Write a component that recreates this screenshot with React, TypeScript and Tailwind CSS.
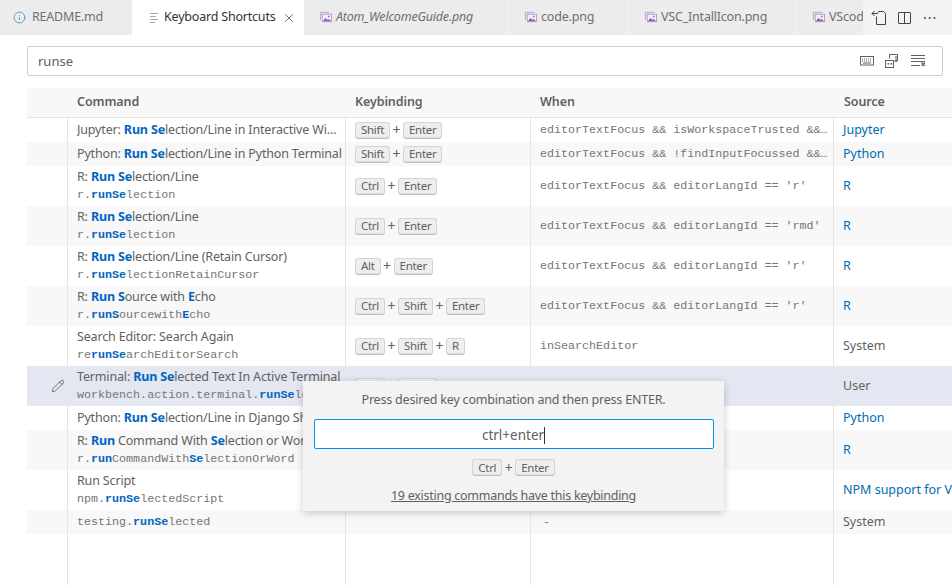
import React from 'react';
import { Info, X, Pencil } from 'lucide-react';

type Row = {
  command?: string;
  id?: string;
  keys?: string[];
  when?: string;
  source: string;
  link?: boolean;
  selected?: boolean;
};

const rows: Row[] = [
  { command: 'Jupyter: [Run Se]lection/Line in Interactive Window', keys: ['Shift', 'Enter'], when: 'editorTextFocus && isWorkspaceTrusted && jupyter.ownsSelection', source: 'Jupyter', link: true },
  { command: 'Python: [Run Se]lection/Line in Python Terminal', keys: ['Shift', 'Enter'], when: 'editorTextFocus && !findInputFocussed && python.datascience', source: 'Python', link: true },
  { command: 'R: [Run Se]lection/Line', id: 'r.[runSe]lection', keys: ['Ctrl', 'Enter'], when: "editorTextFocus && editorLangId == 'r'", source: 'R', link: true },
  { command: 'R: [Run Se]lection/Line', id: 'r.[runSe]lection', keys: ['Ctrl', 'Enter'], when: "editorTextFocus && editorLangId == 'rmd'", source: 'R', link: true },
  { command: 'R: [Run Se]lection/Line (Retain Cursor)', id: 'r.[runSe]lectionRetainCursor', keys: ['Alt', 'Enter'], when: "editorTextFocus && editorLangId == 'r'", source: 'R', link: true },
  { command: 'R: [Run S]ource with [E]cho', id: 'r.[runS]ourcewith[E]cho', keys: ['Ctrl', 'Shift', 'Enter'], when: "editorTextFocus && editorLangId == 'r'", source: 'R', link: true },
  { command: 'Search Editor: Search Again', id: 're[runSe]archEditorSearch', keys: ['Ctrl', 'Shift', 'R'], when: 'inSearchEditor', source: 'System' },
  { command: 'Terminal: [Run Se]lected Text In Active Terminal', id: 'workbench.action.terminal.[runSe]lectedText', keys: ['Ctrl', 'Enter'], source: 'User', selected: true },
  { command: 'Python: [Run Se]lection/Line in Django Shell', source: 'Python', link: true },
  { command: 'R: [Run] Command With [Se]lection or Word', id: 'r.[run]CommandWith[Se]lectionOrWord', source: 'R', link: true },
  { command: 'Run Script', id: 'npm.[runSe]lectedScript', source: 'NPM support for VS Code', link: true },
  { id: 'testing.[runSe]lected', when: '-', source: 'System' },
];

const tabs = [
  { name: 'Atom_WelcomeGuide.png', width: 'w-[205px]', italic: true },
  { name: 'code.png', width: 'w-[120px]' },
  { name: 'VSC_IntallIcon.png', width: 'w-[168px]' },
  { name: 'VScode.png', width: 'w-[120px]' },
];

// text in [brackets] is the search match
const Marked: React.FC<{ text: string }> = ({ text }) => (
  <>
    {text.split(/(\[[^\]]+\])/).map((part, i) =>
      part.startsWith('[') ? (
        <span key={i} className="font-bold text-[#0066bf]">
          {part.slice(1, -1)}
        </span>
      ) : (
        <span key={i}>{part}</span>
      ),
    )}
  </>
);

const KeyCap: React.FC<{ label: string }> = ({ label }) => (
  <span className="inline-flex h-[17px] items-center rounded-[3px] border border-[#d4d4d4] border-b-[#bfbfbf] bg-[#eeeeee] px-[5px] text-[11.5px] leading-none tracking-[-0.3px] text-[#616161] shadow-[inset_0_-1px_0_#dedede]">
    {label}
  </span>
);

const Keys: React.FC<{ keys: string[] }> = ({ keys }) => (
  <div className="flex items-center">
    {keys.map((k, i) => (
      <React.Fragment key={k}>
        {i > 0 && <span className="w-[13px] text-center text-[14px] leading-none text-[#616161]">+</span>}
        <KeyCap label={k} />
      </React.Fragment>
    ))}
  </div>
);

const ImageIcon = () => (
  <svg width="13" height="13" viewBox="0 0 14 14" fill="none" className="shrink-0">
    <path d="M1.5 9.5V1.5H11" stroke="#b597d0" strokeWidth="1" />
    <rect x="3.5" y="3.5" width="10" height="8" fill="#f4eff8" stroke="#b597d0" strokeWidth="1" />
    <path d="M4 11l3-3.5 2 2 1.5-1 2.5 2.5z" fill="#8f62b5" />
    <circle cx="10.5" cy="5.8" r="0.9" fill="#8f62b5" />
  </svg>
);

const LinesIcon = () => (
  <svg width="10" height="12" viewBox="0 0 10 12" fill="none" stroke="#a8a8a8" strokeWidth="1" className="shrink-0">
    <path d="M0 1.5h8M0 4.5h6M0 7.5h8M0 10.5h5" />
  </svg>
);

const OpenFileIcon = () => (
  <svg width="16" height="16" viewBox="0 0 16 16" fill="none" stroke="#424242" strokeWidth="1">
    <path d="M5.5 6.5V14.5H14.5V3.5L12.5 1.5H7.5V2.5" />
    <path d="M3.5 1L1 3.5 3.5 6M1 3.5h6" />
  </svg>
);

const SplitIcon = () => (
  <svg width="14" height="14" viewBox="0 0 14 14" fill="none" stroke="#424242" strokeWidth="1">
    <rect x="0.5" y="1.5" width="12" height="11" rx="0.5" />
    <path d="M6.5 1.5v11" />
  </svg>
);

const KeyboardIcon = () => (
  <svg width="14" height="10" viewBox="0 0 14 10" fill="none" stroke="#616161" strokeWidth="1">
    <rect x="0.5" y="0.5" width="13" height="8.5" />
    <path d="M2 3h10M2 5h10" strokeDasharray="1 1" />
    <path d="M3 7h8" />
  </svg>
);

const SortIcon = () => (
  <svg width="15" height="14" viewBox="0 0 15 14" fill="none" stroke="#616161" strokeWidth="1">
    <rect x="0.5" y="6.5" width="8" height="7" />
    <path d="M4.5 4.5V0.5h8V6.5h-2" />
    <rect x="2.5" y="9" width="1.6" height="1.6" fill="#616161" stroke="none" />
    <rect x="5.5" y="9" width="1.6" height="1.6" fill="#616161" stroke="none" />
    <path d="M11 2v6M9.5 6.5L11 8l1.5-1.5" />
  </svg>
);

const ClearIcon = () => (
  <svg width="15" height="12" viewBox="0 0 15 12" fill="none" stroke="#616161" strokeWidth="1">
    <path d="M0 0.5h14M0 3.5h14M0 6.5h14M0 10.5h9" />
    <path d="M10.5 7.5l3.5 3.5M14 7.5l-3.5 3.5" strokeWidth="1.2" />
  </svg>
);

const TableRow: React.FC<{ row: Row; index: number }> = ({ row, index }) => {
  const tall = row.command && row.id;
  const bg = row.selected ? 'bg-[#e4e6f1]' : index % 2 === 1 ? 'bg-[#f8f8f8]' : 'bg-white';
  return (
    <div className={`flex ${tall ? 'h-10' : 'h-6'} ${bg}`}>
      <div className="flex w-10 shrink-0 items-center justify-end pr-[2px]">
        {row.selected && <Pencil size={14} strokeWidth={1.3} className="text-[#525252]" />}
      </div>
      <div className="flex w-[278px] shrink-0 flex-col justify-center border-l border-[#e5e5e5] pl-[9px] pr-[2px]">
        {row.command && (
          <div className="truncate text-[12.5px] leading-[18px] tracking-[-0.16px]">
            <Marked text={row.command} />
          </div>
        )}
        {row.id && (
          <div className="truncate font-['Liberation_Mono',monospace] text-[11.7px] leading-[18px] text-[#757575]">
            <Marked text={row.id} />
          </div>
        )}
      </div>
      <div className="flex w-[185px] shrink-0 items-center border-l border-[#e5e5e5] pl-[9px]">
        {row.keys && <Keys keys={row.keys} />}
      </div>
      <div className={`flex w-[303px] shrink-0 items-center border-l border-[#e5e5e5] pr-[4px] pt-[2px] ${row.when === '-' ? 'pl-[12px]' : 'pl-[9px]'}`}>
        <div className="truncate font-['Liberation_Mono',monospace] text-[11.7px] text-[#757575]">{row.when}</div>
      </div>
      <div className={`flex min-w-0 flex-1 items-center border-l border-[#e5e5e5] pl-[9px] text-[12.5px] ${row.link ? 'text-[#006ab1]' : ''}`}>
        <span className="whitespace-nowrap">{row.source}</span>
      </div>
    </div>
  );
};

export default function App() {
  return (
    <div className="flex h-screen w-screen flex-col overflow-hidden bg-white font-['Noto_Sans',sans-serif] text-[13px] text-[#616161]">
      {/* Tab bar */}
      <div className="flex h-[35px] shrink-0 bg-[#ececec] text-[12.5px] tracking-[-0.2px]">
        <div className="flex min-w-0 flex-1 overflow-hidden">
          <div className="flex w-[132px] shrink-0 items-center gap-[6px] pl-[13px]">
            <Info size={13} strokeWidth={1.3} className="shrink-0 text-[#1a85c0]" />
            <span className="text-[#6f6f6f]">README.md</span>
          </div>
          <div className="flex w-[172px] shrink-0 items-center bg-white pl-[18px] text-[#333333]">
            <LinesIcon />
            <span className="ml-[4px] whitespace-nowrap">Keyboard Shortcuts</span>
            <X size={14} strokeWidth={1.3} className="ml-[7px] shrink-0 text-[#424242]" />
          </div>
          {tabs.map((tab) => (
            <div key={tab.name} className={`flex ${tab.width} shrink-0 items-center gap-[4px] border-r border-[#f3f3f3] pl-[15px] text-[#6f6f6f]`}>
              <ImageIcon />
              <span className={`whitespace-nowrap ${tab.italic ? 'italic' : ''}`}>{tab.name}</span>
            </div>
          ))}
        </div>
        <div className="flex w-[89px] shrink-0 items-center bg-[#f3f3f3] pl-[8px]">
          <OpenFileIcon />
          <span className="ml-[11px] flex"><SplitIcon /></span>
          <span className="ml-[11px] text-[14px] leading-none tracking-[1px] text-[#424242]">···</span>
        </div>
      </div>

      {/* Search box */}
      <div className="mx-[9px] ml-[27px] mt-[11px] flex h-[30px] shrink-0 items-center rounded-[2px] border border-[#cecece] bg-white pl-[10px] pr-[16px]">
        <span className="flex-1 pt-[2px]">runse</span>
        <div className="flex items-center gap-[11px]">
          <KeyboardIcon />
          <SortIcon />
          <ClearIcon />
        </div>
      </div>

      {/* Table */}
      <div className="relative ml-[27px] mt-[12px] flex min-h-0 flex-1 flex-col">
        <div className="flex h-[30px] shrink-0 items-center border-b border-[#e5e5e5] bg-[#f8f8f8] pb-[1px] text-[12.5px] font-semibold tracking-[-0.1px]">
          <div className="w-[50px] shrink-0" />
          <div className="w-[278px] shrink-0">Command</div>
          <div className="w-[185px] shrink-0">Keybinding</div>
          <div className="w-[304px] shrink-0">When</div>
          <div>Source</div>
        </div>
        {rows.map((row, i) => (
          <TableRow key={i} row={row} index={i} />
        ))}
        <div className="flex flex-1">
          <div className="w-10 shrink-0" />
          <div className="w-[278px] shrink-0 border-l border-[#e5e5e5]" />
          <div className="w-[185px] shrink-0 border-l border-[#e5e5e5]" />
          <div className="w-[303px] shrink-0 border-l border-[#e5e5e5]" />
          <div className="flex-1 border-l border-[#e5e5e5]" />
        </div>

        {/* Define keybinding widget */}
        <div className="absolute left-[276px] top-[293px] flex h-[130px] w-[421px] flex-col items-center bg-[#f3f3f3] shadow-[0_2px_8px_rgba(0,0,0,0.2)]">
          <div className="mt-[10px] text-[12.5px] leading-[18px] tracking-[-0.2px]">Press desired key combination and then press ENTER.</div>
          <div className="mt-[10px] flex h-[30px] w-[400px] items-center justify-center rounded-[2px] border border-[#0090f1] bg-white pt-[2px] text-[13.5px]">
            ctrl+enter
            <span className="h-[17px] w-px bg-[#333333]" />
          </div>
          <div className="mt-[10px]">
            <Keys keys={['Ctrl', 'Enter']} />
          </div>
          <div className="mt-[11px] text-[12.5px] leading-[18px] tracking-[-0.27px] underline">19 existing commands have this keybinding</div>
        </div>
      </div>
    </div>
  );
}
